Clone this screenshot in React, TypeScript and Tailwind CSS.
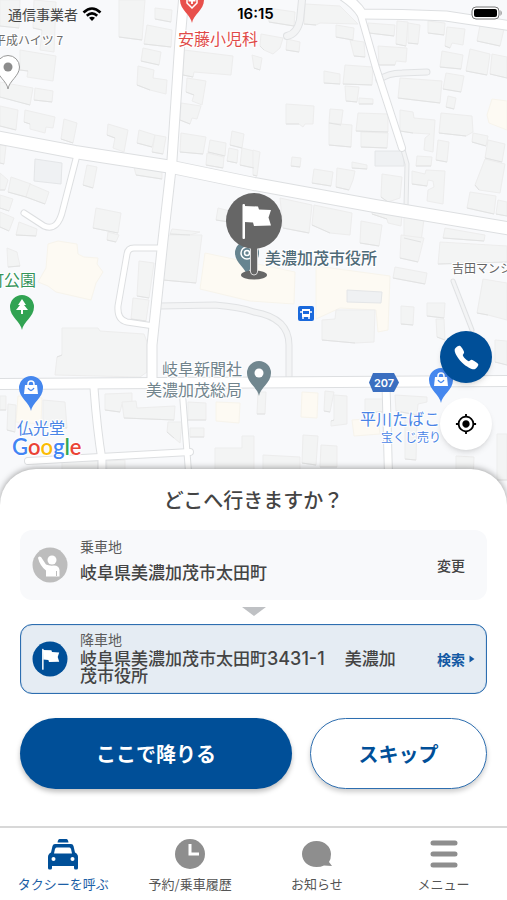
import type { ReactNode } from "react";
import { IoCall } from "react-icons/io5";
import { MdMyLocation } from "react-icons/md";

const buildings: string[] = [
  "119,0 145,0 142,40 119,37",
  "155,8 172,10 171,22 155,19",
  "147,25 172,30 171,47 144,44",
  "143,48 161,52 159,65 141,61",
  "138,66 154,70 153,78 167,80 166,94 150,90 137,85",
  "184,50 233,56 231,75 194,72 193,77 183,75",
  "187,78 206,81 202,105 192,101 194,95 186,92",
  "181,103 201,106 197,119 192,118 190,124 180,120",
  "20,50 56,56 53,81 27,77 28,71 20,70",
  "0,0 20,0 19,28 0,26",
  "34,0 56,2 54,52 40,50 42,30 33,28",
  "0,82 33,88 30,105 0,97",
  "35,88 53,91 52,102 34,100",
  "0,106 18,110 16,130 0,126",
  "25,110 55,117 53,128 46,127 45,133 30,129 30,124 24,122",
  "64,119 77,123 73,143 61,139",
  "108,124 128,130 124,152 113,148 115,138 107,135",
  "139,130 155,135 152,147 137,143",
  "155,135 166,137 163,154 152,152",
  "181,133 206,137 203,154 180,152",
  "210,140 226,143 225,156 208,152",
  "232,131 244,134 242,148 230,145",
  "207,153 224,157 223,168 206,165",
  "229,148 238,150 237,163 227,161",
  "242,148 254,151 254,168 240,165",
  "87,165 97,167 93,188 83,185",
  "134,167 162,172 162,179 136,175",
  "11,177 31,184 26,197 8,192",
  "30,184 49,192 45,204 26,197",
  "0,145 6,146 4,164 0,163",
  "0,173 8,180 5,190 0,190",
  "0,195 13,199 9,211 0,208",
  "0,212 14,218 9,231 0,227",
  "19,222 37,229 36,236 16,235",
  "96,208 121,213 118,233 93,228",
  "305,4 340,6 358,24 320,23 316,25 304,24",
  "268,8 295,12 294,26 269,22",
  "261,34 283,38 280,48 273,54 264,50 260,46",
  "287,39 300,42 299,52 286,50",
  "252,55 262,58 260,70 254,68",
  "336,25 354,28 353,40 336,37",
  "350,40 364,42 365,57 354,56",
  "368,23 395,25 394,36 369,33",
  "397,21 408,22 406,46 396,44",
  "408,23 420,25 418,44 408,43",
  "428,21 445,23 444,35 428,33",
  "447,27 465,29 463,45 452,43 450,48 445,46",
  "480,25 504,29 500,46 477,41",
  "378,46 407,48 406,62 396,61 395,65 379,65",
  "442,51 463,55 461,69 440,67",
  "470,49 490,54 487,75 466,71",
  "492,54 507,57 507,78 490,74",
  "345,65 373,67 372,85 343,84",
  "324,71 340,74 340,84 324,83",
  "345,86 359,87 357,102 346,101",
  "359,98 373,99 373,104 359,104",
  "400,78 442,81 440,103 398,98",
  "446,73 464,76 461,92 443,89",
  "448,96 456,98 454,109 446,107",
  "286,104 314,106 313,124 305,124 303,127 299,124 286,124",
  "330,109 343,110 341,125 329,123",
  "329,123 352,125 351,147 329,145",
  "358,113 388,114 388,132 356,131",
  "361,132 388,133 387,148 361,147",
  "400,110 413,112 414,118 435,120 433,152 424,150 425,138 430,134 413,133 400,131",
  "441,113 472,116 473,132 466,136 439,133",
  "438,140 449,142 447,162 436,160",
  "473,133 488,136 486,146 472,142",
  "488,140 505,144 502,162 485,158",
  "485,159 505,164 500,193 479,190 475,185",
  "417,156 432,157 431,166 416,166",
  "292,157 301,158 300,167 291,166",
  "352,162 367,165 367,169 352,168",
  "253,150 260,152 257,176 253,175",
  "314,169 333,172 331,186 312,183",
  "337,168 355,171 353,180 349,190 336,187",
  "382,174 402,177 400,198 388,202 381,197",
  "412,171 425,174 426,170 445,171 443,204 427,201 428,190 434,187 433,181 428,180 427,186 412,184",
  "470,192 496,196 494,214 467,208",
  "498,200 507,202 507,216 496,214",
  "280,198 312,205 309,233 283,228",
  "314,205 352,213 350,235 330,233 312,225",
  "372,208 402,215 401,226 388,223 387,219 372,214",
  "361,221 382,225 379,246 360,243",
  "404,216 424,219 421,242 404,238",
  "445,228 485,235 484,241 443,238",
  "172,229 200,232 190,235 170,234",
  "218,208 230,211 229,222 216,220",
  "7,248 17,252 20,266 8,267",
  "108,232 119,235 116,242 107,240",
  "139,261 154,263 149,298 137,296",
  "133,298 149,300 146,321 131,319",
  "62,328 98,328 100,331 144,334 147,342 147,372 140,377 55,375 57,357 62,355",
  "166,235 202,235 196,283 163,280",
  "322,320 335,319 336,310 375,310 374,342 355,343 322,340",
  "401,235 424,238 418,262 400,258",
  "440,242 507,246 507,262 438,264",
  "395,267 427,273 425,284 393,278",
  "401,306 414,307 413,325 401,324",
  "427,303 445,303 444,318 427,316",
  "436,319 444,319 445,340 437,337",
  "483,279 507,283 507,320 488,315 477,313",
  "495,340 507,341 507,365 495,362",
  "0,396 6,396 6,410 0,410",
  "8,404 16,405 15,432 7,430",
  "43,400 65,402 67,428 43,426",
  "105,394 132,393 132,402 122,404 120,412 105,410",
  "122,402 136,401 137,408 175,406 174,420 124,418",
  "168,422 182,422 180,443 174,438 167,432",
  "188,402 206,403 206,420 188,420",
  "190,428 204,428 204,437 190,437",
  "215,448 242,448 242,436 254,436 254,480 215,480",
  "258,392 266,392 265,414 257,414",
  "325,391 334,392 330,412 324,411",
  "334,395 347,396 347,424 331,426 331,421 334,420",
  "365,399 383,399 383,412 365,412",
  "395,395 427,397 427,402 418,404 417,415 396,411",
  "303,435 318,436 316,465 302,463",
  "321,445 337,446 337,467 320,467",
  "263,455 300,457 300,480 263,480",
  "405,418 417,420 416,460 405,459",
  "456,456 474,457 473,480 456,480",
  "497,434 507,434 507,480 497,480",
  "62,460 98,461 97,485 62,482",
  "107,461 125,460 125,480 107,480",
];

const publicBuildings: string[] = [
  "48,244 58,241 77,244 78,254 84,257 98,258 97,264 103,272 96,283 91,300 56,292 48,286 38,282 46,268",
  "205,253 295,272 294,304 250,301 200,289",
  "316,266 390,276 388,330 378,332 376,310 340,308 316,319",
  "487,115 492,99 507,101 507,130 489,123",
  "302,392 318,393 317,418 301,417",
  "18,396 42,398 41,424 16,422",
  "216,402 240,403 239,423 216,421",
  "352,420 378,418 380,434 354,436",
];

const annexes: string[] = [
  "35,159 62,163 61,184 34,181",
  "375,151 404,151 404,166 375,166",
  "347,290 382,292 381,303 347,302",
];

type Road = { d: string; width: number };

const lanes: Road[] = [
  { d: "M302 0 300 20 Q297 34 287 36", width: 6 },
  { d: "M379 80 Q388 73 402 73 L427 72", width: 5 },
  { d: "M160 306 215 305 Q240 307 254 312 Q289 318 289 345 V380", width: 5 },
  { d: "M402 146 407 164 406 206", width: 3 },
  { d: "M453 281 472 330", width: 3 },
];

const roads: Road[] = [
  { d: "M-5 137 75 152 172 167 254 184 375 206 512 229", width: 12 },
  { d: "M184 -5 180 40 172 160 163 240 152 345 V384", width: 9 },
  { d: "M-5 384 160 383 512 381", width: 10 },
  { d: "M77 155 63 209 Q58 232 44 226 L24 213", width: 5 },
  { d: "M160 248 H134 Q128 248 127 254 L118 306 Q117 320 127 322 L154 326", width: 5 },
  { d: "M94 388 Q97 430 102 460 V530", width: 7 },
  { d: "M28 461 Q100 457 190 452", width: 6 },
  { d: "M182 388 193 530", width: 5 },
  { d: "M342 -5 Q356 4 362 14 Q400 14 446 16 L512 26", width: 9 },
  { d: "M360 12 376 68 402 148", width: 6 },
  { d: "M386 384 390 530", width: 7 },
];

function Pin({ x, y, color, children }: { x: number; y: number; color: string; children: ReactNode }) {
  return (
    <g transform={`translate(${x} ${y})`}>
      <path d="M0 23C-1 15 -12 10 -12 0A12 12 0 0 1 12 0C12 10 1 15 0 23Z" fill={color} />
      {children}
    </g>
  );
}

function ShopGlyph() {
  return (
    <g>
      <path d="M-6 -3H6L7 6H-7Z" fill="#fff" />
      <path d="M-3 -3V-4A3 3 0 0 1 3 -4V-3" fill="none" stroke="#fff" strokeWidth="1.5" />
      <path d="M-3 0Q0 5 3 0" fill="none" stroke="#4587ee" strokeWidth="1.4" />
    </g>
  );
}

function FlagGlyph() {
  return (
    <g fill="#fff">
      <rect x="-11.5" y="-17" width="2.5" height="35" rx="1" />
      <path d="M-10 -15L4 -14.500L5 -11.500L17 -11L14.500 -3.500L17 4.500L0 5L-1 1.500L-9.500 1Z" />
    </g>
  );
}

const halo = "stroke-white stroke-2 [paint-order:stroke]";

function MapCanvas() {
  return (
    <svg
      className="block h-[528px] w-full bg-[#f8f9fb]"
      viewBox="0 0 507 528"
      preserveAspectRatio="xMidYMid slice"
      role="img"
      aria-label="地図"
    >
      <g fill="#fdfaf3" stroke="#f7f4ec">
        {publicBuildings.map((points) => <polygon key={points} points={points} />)}
      </g>
      <g fill="#f3f4f4" stroke="#ededed">
        {buildings.map((points) => <polygon key={points} points={points} />)}
      </g>
      <g fill="none" stroke="#e2e3e3">
        {buildings.map((points) => {
          const corners = points.split(" ");
          return <polyline key={points} points={corners.slice(-2).join(" ")} />;
        })}
      </g>
      <g fill="#eff1f3" stroke="#e4e6e8">
        {annexes.map((points) => <polygon key={points} points={points} />)}
      </g>
      <g fill="none" strokeLinecap="round" strokeLinejoin="round">
        {lanes.map((r) => <path key={r.d} d={r.d} stroke="#e0e2e4" strokeWidth={r.width + 2} />)}
        {lanes.map((r) => <path key={r.d + "f"} d={r.d} stroke="#f3f4f5" strokeWidth={r.width} />)}
        {roads.map((r) => <path key={r.d} d={r.d} stroke="#dddfe1" strokeWidth={r.width + 2} />)}
        {roads.map((r) => <path key={r.d + "f"} d={r.d} stroke="#ffffff" strokeWidth={r.width} />)}
      </g>

      <path d="M373 373H394L399 382.500 394 392H373L369 382.500Z" fill="#3b6fc0" />
      <text x="384" y="387" textAnchor="middle" className="fill-white font-['Inter'] text-[11px] font-semibold">207</text>

      <rect x="298" y="306" width="16" height="15" rx="2" fill="#1a69dc" />
      <path d="M302 309H310V317H302Z" fill="#fff" />
      <path d="M303 311H309V314H303Z" fill="#1a69dc" />
      <path d="M303 317V319M309 317V319M301 311V313M311 311V313" stroke="#fff" strokeWidth="1.5" />

      <Pin x={192} y={0} color="#e8504b">
        <path d="M-5 -8H5V3L0 8 -5 3Z" fill="none" stroke="#fff" strokeWidth="1.500" />
        <path d="M0 -3V4M-3.500 0.500H3.500" stroke="#fff" strokeWidth="1.800" />
      </Pin>
      <g transform="translate(8 67)">
        <path d="M0 22C-1 14 -11.500 9 -11.500 0A11.500 11.500 0 0 1 11.500 0C11.500 9 1 14 0 22Z" fill="#fff" stroke="#999" />
        <circle r="4.500" fill="#8c8c8c" />
      </g>
      <Pin x={22} y={307} color="#31a352">
        <path d="M0 -8L4 -2H2L6 3H1V7H-1V3H-6L-2 -2H-4Z" fill="#fff" />
      </Pin>
      <Pin x={31} y={388} color="#4587ee"><ShopGlyph /></Pin>
      <Pin x={441} y={380} color="#4587ee"><ShopGlyph /></Pin>
      <Pin x={259} y={373} color="#71878f"><circle r="4.500" fill="#fff" /></Pin>
      <Pin x={247} y={253} color="#668490">
        <circle r="6" fill="none" stroke="#fff" strokeWidth="1.500" />
        <circle r="2.500" fill="none" stroke="#fff" strokeWidth="1.500" />
      </Pin>

      <ellipse cx="254" cy="275" rx="13" ry="4.500" fill="#666" />
      <path d="M250.500 246H257.500V272Q257 275 254 275Q251 275 250.500 272Z" fill="#666" stroke="#d9d9d9" />
      <circle cx="254" cy="221" r="28" fill="#666" />
      <g transform="translate(254 221)"><FlagGlyph /></g>

      <g className={halo}>
        <text x="-6" y="45" className="fill-[#6b6b6b] text-[12px]">平成ハイツ 7</text>
        <text x="178" y="45" className="fill-[#df4a48] text-[16px]">安藤小児科</text>
        <text x="265" y="264" className="fill-[#4f6b78] text-[16px] font-medium">美濃加茂市役所</text>
        <text x="452" y="273" className="fill-[#666] text-[12px]">吉田マンション</text>
        <text x="-12" y="286" className="fill-[#35945a] text-[16px]">町公園</text>
        <text x="162" y="375" className="fill-[#71848d] text-[16px]">岐阜新聞社</text>
        <text x="146" y="396" className="fill-[#71848d] text-[16px]">美濃加茂総局</text>
        <text x="17" y="434" className="fill-[#4a84e6] text-[16px]">仏光堂</text>
        <text x="360" y="425" className="fill-[#4a84e6] text-[16px]">平川たばこ</text>
        <text x="381" y="442" className="fill-[#4a84e6] text-[12px]">宝くじ売り</text>
        <text x="12" y="455" className="font-['Lato'] text-[22px] font-semibold">
          <tspan fill="#4285f4">G</tspan>
          <tspan fill="#ea4335">o</tspan>
          <tspan fill="#fbbc05">o</tspan>
          <tspan fill="#4285f4">g</tspan>
          <tspan fill="#34a853">l</tspan>
          <tspan fill="#ea4335">e</tspan>
        </text>
      </g>
    </svg>
  );
}

function StatusBar() {
  return (
    <div className="absolute inset-x-0 top-0 grid h-7 grid-cols-3 items-center pr-1 pl-2">
      <div className="flex items-center gap-1">
        <span className="text-[14px] leading-5 text-[#444]">通信事業者</span>
        <svg width="20" height="14" viewBox="0 0 20 14" fill="none" stroke="#000" strokeWidth="2.600">
          <path d="M1.500 5.500Q10 -2.500 18.500 5.500" />
          <path d="M4.800 8.800Q10 4 15.200 8.800" />
          <path d="M10 14L7 10.800Q10 8.500 13 10.800Z" fill="#000" stroke="none" />
        </svg>
      </div>
      <time className="text-center font-['Inter'] text-[15px] leading-5 font-semibold text-black">16:15</time>
      <svg className="justify-self-end" width="32" height="16" viewBox="0 0 32 16">
        <rect x="1" y="1" width="27" height="12" rx="4" fill="#fff" stroke="#777" />
        <rect x="3" y="3" width="23" height="8" rx="2" fill="#000" />
        <path d="M29.500 4Q32 7 29.500 10Z" fill="#888" />
      </svg>
    </div>
  );
}

function TaxiIcon() {
  return (
    <svg width="32" height="32" viewBox="0 0 32 32">
      <path d="M12.500 1H19.500Q21 1 21.500 4.500H10.500Q11 1 12.500 1Z" fill="currentColor" />
      <path
        d="M8 6H24Q26 6 26.500 8L28 14.500Q31 16 31 19V30Q31 31.500 29.500 31.500H28.500Q27 31.500 27 30V28H5V30Q5 31.500 3.500 31.500H2.500Q1 31.500 1 30V19Q1 16 4 14.500L5.500 8Q6 6 8 6Z"
        fill="currentColor"
      />
      <path d="M9.500 9.500H22.500Q23.500 9.500 24 11L25 15.500H7L8 11Q8.500 9.500 9.500 9.500Z" fill="#fff" />
      <circle cx="6.500" cy="21" r="2" fill="#fff" />
      <circle cx="25.500" cy="21" r="2" fill="#fff" />
    </svg>
  );
}

function NavItem({ label, active = false, children }: { label: string; active?: boolean; children: ReactNode }) {
  return (
    <a
      href="#"
      aria-current={active ? "page" : undefined}
      className={`flex flex-1 flex-col items-center pt-[6px] ${active ? "text-[#004f98]" : "text-[#8e8e8e]"}`}
    >
      <span className="flex h-10 items-center justify-center">{children}</span>
      <span className={`text-[13px] leading-5 whitespace-nowrap ${active ? "text-[#1d60a6]" : "text-[#555]"}`}>{label}</span>
    </a>
  );
}

export default function App() {
  return (
    <div className="flex min-h-screen flex-col overflow-x-hidden bg-white font-['Noto_Sans_CJK_JP',sans-serif] text-[#444]">
      <header className="relative">
        <MapCanvas />
        <StatusBar />
        <div className="absolute top-[331px] right-[15px] flex flex-col gap-[15px]">
          <button type="button" aria-label="電話" className="flex size-[52px] items-center justify-center rounded-full bg-[#004f98] text-white shadow-md">
            <IoCall size={27} />
          </button>
          <button type="button" aria-label="現在地" className="flex size-[52px] items-center justify-center rounded-full bg-white text-black shadow-md">
            <MdMyLocation size={22} />
          </button>
        </div>
      </header>

      <main className="relative -mt-[59px] flex-1 rounded-t-[36px] bg-white px-5 pt-4 pb-8 shadow-[0_-1px_6px_rgba(0,0,0,0.35)]">
        <h1 className="text-center text-[20px] leading-[30px] font-medium">どこへ行きますか？</h1>

        <section className="mt-[15px] flex min-h-[70px] items-center rounded-xl bg-[#f8f9fb] px-3">
          <svg className="mr-3 shrink-0" width="36" height="36" viewBox="0 0 36 36">
            <circle cx="18" cy="18" r="17.500" fill="#bdbdbd" />
            <circle cx="20" cy="13" r="4.500" fill="#fff" />
            <path d="M6 11Q6.500 8.500 9 10L14 17.500Q17 19 22 18.500Q27 18.500 27.500 23V29.500H14V23.500Q8 19 6 11Z" fill="#fff" />
            <path d="M24.500 24V29" stroke="#bdbdbd" />
          </svg>
          <div className="flex-1 pb-[10px]">
            <p className="text-[14px] leading-4 text-[#5c5c5c]">乗車地</p>
            <p className="mt-2 text-[17px] leading-5 font-medium">岐阜県美濃加茂市太田町</p>
          </div>
          <button type="button" className="mr-[10px] text-[14px] leading-5 font-medium">変更</button>
        </section>

        <svg className="mx-auto mt-[7px] mb-2 block" width="24" height="9" viewBox="0 0 24 9">
          <path d="M0 0H24L12 9Z" fill="#bfc1c4" />
        </svg>

        <section className="flex min-h-[70px] items-center rounded-xl border border-[#2d6eb0] bg-[#e5ecf3] px-[11px] shadow-[inset_0_0_1px_#2d6eb0]">
          <svg className="mr-3 shrink-0" width="36" height="36" viewBox="0 0 36 36">
            <circle cx="18" cy="18" r="17.500" fill="#004f98" />
            <g transform="translate(17 18) scale(0.6)"><FlagGlyph /></g>
          </svg>
          <div className="max-w-[328px] flex-1 pb-1">
            <p className="text-[14px] leading-4 text-[#5c5c5c]">降車地</p>
            <p className="mt-[2px] text-[17px] leading-[17px] font-medium">
              岐阜県美濃加茂市太田町<span className="mr-5 font-['Inter'] text-[18px] leading-[0]">3431-1</span>美濃加茂市役所
            </p>
          </div>
          <button type="button" className="ml-auto flex items-center gap-1 text-[14px] leading-5 font-bold whitespace-nowrap text-[#1359a3]">
            検索
            <svg width="6" height="8" viewBox="0 0 6 8"><path d="M0.500 0.500L5.500 4 0.500 7.500Z" fill="#1359a3" /></svg>
          </button>
        </section>

        <div className="mt-6 grid grid-cols-[1fr_177px] gap-[18px]">
          <button type="button" className="h-[71px] rounded-full bg-[#004f98] text-[20px] font-bold text-white shadow-[0_3px_5px_rgba(0,0,0,0.25)]">ここで降りる</button>
          <button type="button" className="h-[71px] rounded-full border border-[#2d6eb0] bg-white text-[20px] font-bold text-[#004f98] shadow-[0_3px_5px_rgba(0,0,0,0.2)]">スキップ</button>
        </div>
      </main>

      <nav className="relative flex h-[74px] border-t-2 border-[#d8d8d8] bg-white">
        <NavItem label="タクシーを呼ぶ" active>
          <TaxiIcon />
        </NavItem>
        <NavItem label="予約/乗車履歴">
          <svg width="32" height="32" viewBox="0 0 32 32">
            <circle cx="16" cy="16" r="15" fill="currentColor" />
            <path d="M16 6V16H25" fill="none" stroke="#fff" strokeWidth="3" />
          </svg>
        </NavItem>
        <NavItem label="お知らせ">
          <svg width="32" height="28" viewBox="0 0 32 28">
            <path d="M15.500 1C24 1 30 7 30 14Q30 19 28 22L31 26 23 25.500Q20 27 15.500 27C7 27 1 21 1 14S7 1 15.500 1Z" fill="currentColor" />
          </svg>
        </NavItem>
        <NavItem label="メニュー">
          <svg width="28" height="28" viewBox="0 0 28 28" stroke="currentColor" strokeWidth="5" strokeLinecap="round">
            <path d="M3 3H25M3 14H25M3 25H25" />
          </svg>
        </NavItem>
      </nav>
    </div>
  );
}
